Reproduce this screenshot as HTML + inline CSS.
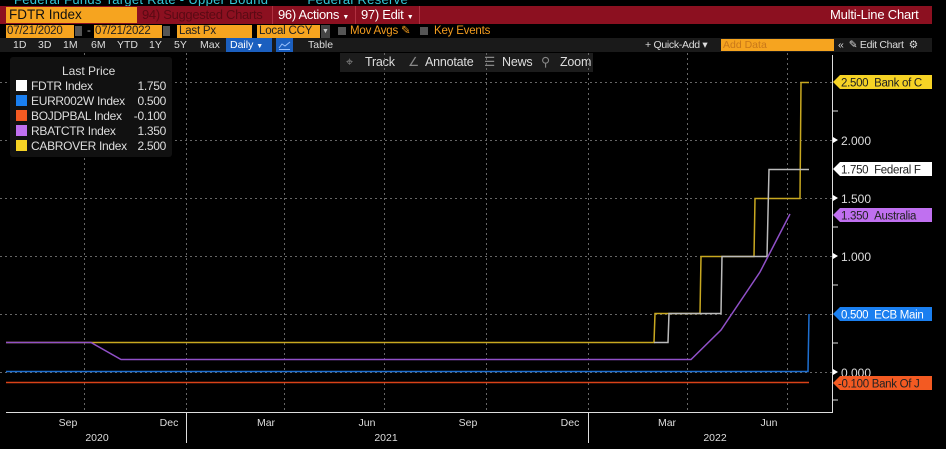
<!DOCTYPE html>
<html><head><meta charset="utf-8"><style>
*{margin:0;padding:0;box-sizing:border-box}
body{width:946px;height:449px;background:#000;overflow:hidden;font-family:"Liberation Sans",sans-serif;position:relative;color:#ddd}
.a{position:absolute;white-space:nowrap}
.f{font-size:11.5px;line-height:13px;letter-spacing:-0.2px}
.lg div{position:relative;height:15px}
.lg b{font-weight:normal;position:absolute;right:0;top:0}
.tb{position:absolute;top:54px;font-size:12.5px;line-height:17px;color:#ddd;letter-spacing:-0.2px;white-space:nowrap}
.ti{color:#888}
</style></head><body>
<div class="a" style="left:14px;top:-8px;font-size:13px;color:#33c8d8;letter-spacing:.3px">Federal Funds Target Rate - Upper Bound&nbsp;&nbsp;&nbsp;&nbsp;&nbsp;&nbsp;&nbsp;&nbsp;&nbsp;&nbsp;Federal Reserve</div>
<div class="a" style="left:0;top:6px;width:932px;height:18px;background:#8c1020"></div>
<div class="a" style="left:6px;top:7px;width:131px;height:16px;background:#f6a41f;color:#111;font-size:13.5px;line-height:16px;padding-left:3px">FDTR Index</div>
<div class="a" style="left:142px;top:7px;font-size:13px;line-height:16px;color:#5a0a14;letter-spacing:-0.3px">94) Suggested Charts</div>
<div class="a" style="left:272px;top:6px;width:84px;height:18px;border-left:1px solid #b03040;border-right:1px solid #b03040;color:#fff;font-size:13px;line-height:18px;padding-left:5px;letter-spacing:-0.3px">96) Actions <span style="font-size:7px">▼</span></div>
<div class="a" style="left:357px;top:6px;width:63px;height:18px;border-right:1px solid #b03040;color:#fff;font-size:13px;line-height:18px;padding-left:4px;letter-spacing:-0.3px">97) Edit <span style="font-size:7px">▼</span></div>
<div class="a" style="left:830px;top:6px;font-size:13px;line-height:18px;color:#fff;letter-spacing:-0.2px">Multi-Line Chart</div>
<div class="a f" style="left:6px;top:25px;width:68px;background:#f6a41f;color:#222;padding-left:1px">07/21/2020</div>
<div class="a" style="left:75px;top:26px;width:7px;height:10px;background:#555"></div>
<div class="a f" style="left:87px;top:25px;color:#aaa">-</div>
<div class="a f" style="left:94px;top:25px;width:68px;background:#f6a41f;color:#222;padding-left:1px">07/21/2022</div>
<div class="a" style="left:163px;top:26px;width:7px;height:10px;background:#555"></div>
<div class="a f" style="left:177px;top:25px;width:75px;background:#f6a41f;color:#222;padding-left:2px">Last Px</div>
<div class="a f" style="left:257px;top:25px;width:63px;background:#f6a41f;color:#222;padding-left:2px">Local CCY</div>
<div class="a" style="left:321px;top:25px;width:9px;height:13px;background:#444;color:#ccc;font-size:7px;text-align:center;line-height:13px">▼</div>
<div class="a" style="left:338px;top:27px;width:8px;height:8px;background:#555"></div>
<div class="a f" style="left:350px;top:25px;color:#f39c1e">Mov Avgs ✎</div>
<div class="a" style="left:420px;top:27px;width:8px;height:8px;background:#555"></div>
<div class="a f" style="left:434px;top:25px;color:#f39c1e">Key Events</div>
<div class="a" style="left:0;top:38px;width:932px;height:14px;background:#1a1a1a"></div>
<div class="a" style="left:0;top:38px;font-size:10.5px;line-height:14px;color:#ddd">
<span style="position:absolute;left:13px">1D</span><span style="position:absolute;left:38px">3D</span><span style="position:absolute;left:63px">1M</span><span style="position:absolute;left:91px">6M</span><span style="position:absolute;left:117px">YTD</span><span style="position:absolute;left:149px">1Y</span><span style="position:absolute;left:174px">5Y</span><span style="position:absolute;left:200px">Max</span></div>
<div class="a" style="left:226px;top:38px;width:46px;height:14px;background:#1b5fbf;color:#fff;font-size:10.5px;line-height:14px;padding-left:4px">Daily <span style="font-size:7px">▼</span></div>
<div class="a" style="left:276px;top:38px;width:17px;height:14px;background:#1b5fbf"></div>
<svg class="a" style="left:278px;top:40px" width="13" height="10"><polyline points="1,8 4,4 7,6 12,2" fill="none" stroke="#9cc3ff" stroke-width="1"/><line x1="1" y1="9.5" x2="12" y2="9.5" stroke="#9cc3ff"/></svg>
<div class="a" style="left:308px;top:38px;font-size:10.5px;line-height:14px;color:#ddd">Table</div>
<div class="a" style="left:645px;top:38px;font-size:10.5px;line-height:14px;color:#ddd;letter-spacing:-0.3px">+ Quick-Add ▾</div>
<div class="a" style="left:721px;top:39px;width:113px;height:12px;background:#f6a41f;color:#c9781a;font-size:10.5px;line-height:12px;padding-left:2px">Add Data</div>
<div class="a" style="left:838px;top:38px;font-size:10.5px;line-height:14px;color:#ddd;letter-spacing:-0.3px">«&nbsp; ✎ Edit Chart&nbsp; ⚙</div>
<div class="a" style="left:340px;top:53px;width:253px;height:19px;background:#1c1c1c"></div>
<div class="tb" style="left:346px"><span class="ti">⌖</span></div><div class="tb" style="left:365px">Track</div>
<div class="tb" style="left:408px"><span class="ti">∠</span></div><div class="tb" style="left:425px">Annotate</div>
<div class="tb" style="left:484px"><span class="ti">☰</span></div><div class="tb" style="left:502px">News</div>
<div class="tb" style="left:541px"><span class="ti">⚲</span></div><div class="tb" style="left:560px">Zoom</div>
<svg class="a" style="left:0;top:0" width="946" height="449">
<g stroke="#666" stroke-dasharray="2,3" stroke-width="1">
<line x1="0" y1="82.5" x2="832" y2="82.5"/><line x1="0" y1="140.5" x2="832" y2="140.5"/><line x1="0" y1="198.5" x2="832" y2="198.5"/><line x1="0" y1="256.5" x2="832" y2="256.5"/><line x1="0" y1="314.5" x2="832" y2="314.5"/><line x1="0" y1="372.5" x2="832" y2="372.5"/>
<line x1="84.5" y1="53" x2="84.5" y2="413"/><line x1="186.5" y1="53" x2="186.5" y2="413"/><line x1="284.5" y1="53" x2="284.5" y2="413"/><line x1="384.5" y1="53" x2="384.5" y2="413"/><line x1="486.5" y1="53" x2="486.5" y2="413"/><line x1="588.5" y1="53" x2="588.5" y2="413"/><line x1="687.5" y1="53" x2="687.5" y2="413"/><line x1="787.5" y1="53" x2="787.5" y2="413"/>
</g>
<g fill="none" stroke-width="1.5">
<polyline stroke="#c8a820" points="6,342.5 654,342.5 655,313.5 700,313.5 701,256.5 754,256.5 755,198.5 800,198.5 801,82.5 809,82.5"/>
<polyline stroke="#bbb" points="654,342.5 668,342.5 669,313.5 721,313.5 722,256.5 767,256.5 769,169.5 809,169.5"/>
<polyline stroke="#9050c8" points="6,342.5 91,342.5 121,359.5 691,359.5 721,330 760,272 790,214"/>
<polyline stroke="#1e6fd0" points="6,371.5 808,371.5 809,314"/>
<polyline stroke="#d84218" points="6,382.5 809,382.5"/>
</g>
<line x1="832.5" y1="55" x2="832.5" y2="413" stroke="#ddd"/>
<line x1="6" y1="412.5" x2="833" y2="412.5" stroke="#ddd"/>
<g stroke="#ddd"><line x1="833" y1="111" x2="838" y2="111"/><line x1="833" y1="227" x2="838" y2="227"/><line x1="833" y1="285" x2="838" y2="285"/><line x1="833" y1="343" x2="838" y2="343"/><line x1="833" y1="400" x2="838" y2="400"/>
<line x1="186.5" y1="413" x2="186.5" y2="443"/><line x1="588.5" y1="413" x2="588.5" y2="443"/></g>
<g fill="#fff"><polygon points="833,137 838,140 833,143"/><polygon points="833,195 838,198 833,201"/><polygon points="833,253 838,256 833,259"/><polygon points="833,369 838,372 833,375"/></g>
<g font-family="Liberation Sans" font-size="12" fill="#ddd"><text x="841" y="145">2.000</text><text x="841" y="203">1.500</text><text x="841" y="261">1.000</text><text x="841" y="377">0.000</text></g>
<g font-family="Liberation Sans" font-size="11.5" letter-spacing="-0.3">
<polygon points="833,82 840,75 932,75 932,89 840,89" fill="#f6d325"/>
<text x="841" y="86.5" fill="#222">2.500 &#160;Bank of C</text>
<polygon points="833,169 840,162 932,162 932,176 840,176" fill="#fff"/>
<text x="841" y="173.5" fill="#222">1.750 &#160;Federal F</text>
<polygon points="833,215 840,208 932,208 932,222 840,222" fill="#c070f0"/>
<text x="841" y="219.5" fill="#222">1.350 &#160;Australia</text>
<polygon points="833,314 840,307 932,307 932,321 840,321" fill="#1a7ff0"/>
<text x="841" y="318.5" fill="#fff">0.500 &#160;ECB Main</text>
<polygon points="833,383 840,376 932,376 932,390 840,390" fill="#f35a22"/>
<text x="838" y="387.5" fill="#222">-0.100 Bank Of J</text>
</g>
<g font-family="Liberation Sans" font-size="10.5" fill="#ddd" text-anchor="middle">
<text x="68" y="426">Sep</text><text x="169" y="426">Dec</text><text x="266" y="426">Mar</text><text x="367" y="426">Jun</text><text x="468" y="426">Sep</text><text x="570" y="426">Dec</text><text x="667" y="426">Mar</text><text x="769" y="426">Jun</text>
<text x="97" y="441">2020</text><text x="386" y="441">2021</text><text x="715" y="441">2022</text></g>
</svg>
<div class="a" style="left:10px;top:57px;width:162px;height:100px;background:#111;border-radius:3px"></div>
<div class="a" style="left:62px;top:64px;font-size:12px;color:#ddd">Last Price</div>
<div class="a lg" style="left:16px;top:79px;width:150px;font-size:12px;line-height:15px;color:#ddd;letter-spacing:-0.3px">
<div><span style="display:inline-block;width:11px;height:11px;background:#fff;margin-right:4px;vertical-align:-1px"></span>FDTR Index<b>1.750</b></div>
<div><span style="display:inline-block;width:11px;height:11px;background:#1a7ff0;margin-right:4px;vertical-align:-1px"></span>EURR002W Index<b>0.500</b></div>
<div><span style="display:inline-block;width:11px;height:11px;background:#f35a22;margin-right:4px;vertical-align:-1px"></span>BOJDPBAL Index<b>-0.100</b></div>
<div><span style="display:inline-block;width:11px;height:11px;background:#c070f0;margin-right:4px;vertical-align:-1px"></span>RBATCTR Index<b>1.350</b></div>
<div><span style="display:inline-block;width:11px;height:11px;background:#f6d325;margin-right:4px;vertical-align:-1px"></span>CABROVER Index<b>2.500</b></div>
</div>
</body></html>
